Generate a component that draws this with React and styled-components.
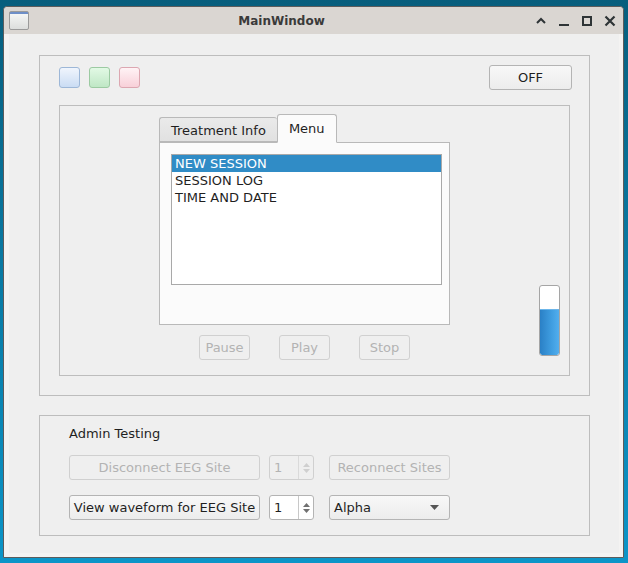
import { useState } from "react"
import styled, { createGlobalStyle, css } from "styled-components"

const Global = createGlobalStyle`
  html, body {
    margin: 0;
    padding: 0;
  }
  body {
    width: 628px;
    height: 563px;
    overflow: hidden;
    background: linear-gradient(180deg, #075e7d 0%, #0a79a2 45%, #0c95c8 100%);
    font-family: "DejaVu Sans", "Liberation Sans", sans-serif;
    font-size: 13px;
    color: #1f1f1f;
  }
`

const Window = styled.div`
  margin: 6px 0 0 3px;
  width: 619px;
  height: 550px;
  border: 1px solid #5c5c5c;
  border-radius: 4px 4px 0 0;
  display: flex;
  flex-direction: column;
  background: #f4f3f2;
`

const TitleBar = styled.div`
  height: 27px;
  display: flex;
  align-items: center;
  padding: 0 6px 0 5px;
  background: #dad6d2;
  border-radius: 4px 4px 0 0;
`

const AppIcon = styled.div`
  width: 18px;
  height: 17px;
  border: 1px solid #9a9a9a;
  border-radius: 2px;
  background: linear-gradient(180deg, #6e8fc8 0 2px, #f4f5f4 2px, #dcdedd 100%);
`

const Title = styled.div`
  flex: 1;
  text-align: center;
  font-weight: bold;
  font-size: 12px;
  color: #3a3a3a;
`

const TitleButtons = styled.div`
  display: flex;
  align-items: center;
  gap: 9px;
  color: #2e3436;
`

const Content = styled.div`
  flex: 1;
  margin: 0 4px 4px 5px;
  padding: 21px 29px 0 30px;
  background: #efefef;
  display: flex;
  flex-direction: column;
  gap: 19px;
`

const GroupBox = styled.div`
  border: 1px solid #bdbdbd;
  height: ${(p) => p.$h}px;
  box-sizing: border-box;
  padding: ${(p) => p.$pad};
  display: flex;
  flex-direction: column;
`

const TopRow = styled.div`
  display: flex;
  align-items: center;
  margin-right: -2px;
  height: 25px;
`

const LedRow = styled.div`
  display: flex;
  gap: 9px;
  flex: 1;
`

const leds = {
  blue: css`border-color: #9db7d7; background: linear-gradient(180deg, #f0f5fd, #cadcf3);`,
  green: css`border-color: #9ccaa2; background: linear-gradient(180deg, #e2f9e5, #bfe7c5);`,
  red: css`border-color: #dca7b1; background: linear-gradient(180deg, #fff3f5, #f8d0d9);`,
}

const Led = styled.div`
  width: 19px;
  height: 19px;
  border: 1px solid;
  border-radius: 3px;
  ${(p) => leds[p.$color]}
`

const PushButton = styled.button`
  box-sizing: border-box;
  width: ${(p) => p.$w}px;
  height: 25px;
  flex-shrink: 0;
  padding: 0;
  font-family: inherit;
  font-size: 13px;
  border: 1px solid #b4b4b4;
  border-radius: 3px;
  color: #1f1f1f;
  background: linear-gradient(180deg, #f8f8f8, #ececec);
  &:disabled {
    color: #b3b3b3;
    border-color: #d0d0d0;
    background: #efefef;
  }
`

const Frame = styled.div`
  margin-top: 15px;
  height: 271px;
  box-sizing: border-box;
  border: 1px solid #bdbdbd;
  padding: 9px 9px 15px 99px;
  display: flex;
  align-items: flex-end;
`

const PlayerColumn = styled.div`
  width: 291px;
  display: flex;
  flex-direction: column;
  align-self: stretch;
`

const TabBar = styled.div`
  display: flex;
  align-items: flex-end;
  height: 27px;
  flex-shrink: 0;
  position: relative;
  z-index: 1;
`

const Tab = styled.div`
  box-sizing: border-box;
  height: 25px;
  padding: 1px 11px 0;
  display: flex;
  align-items: center;
  border: 1px solid #b9b9b9;
  border-right: none;
  border-radius: 3px 3px 0 0;
  background: linear-gradient(180deg, #eaeaea, #e1e1e1);
  ${(p) =>
    p.$active &&
    css`
      height: 29px;
      padding-top: 0;
      margin-bottom: -1px;
      border-right: 1px solid #b9b9b9;
      border-bottom-color: #fbfbfb;
      background: #fbfbfb;
    `}
`

const TabPane = styled.div`
  box-sizing: border-box;
  height: 183px;
  flex-shrink: 0;
  border: 1px solid #b9b9b9;
  background: #fbfbfb;
  padding: 11px 7px 0 11px;
`

const ListBox = styled.div`
  box-sizing: border-box;
  height: 131px;
  border: 1px solid #a9a9a9;
  background: #ffffff;
`

const ListItem = styled.div`
  height: 17px;
  line-height: 17px;
  padding-left: 3px;
  ${(p) => p.$selected && css`background: #308cc6; color: #ffffff;`}
`

const Transport = styled.div`
  display: flex;
  justify-content: center;
  gap: 29px;
  margin-top: 10px;
`

const Spacer = styled.div`
  flex: 1;
`

const Meter = styled.div`
  box-sizing: border-box;
  width: 21px;
  height: 71px;
  margin-bottom: 4px;
  border: 1px solid #a5a5a5;
  border-radius: 3px;
  background: #ffffff;
  display: flex;
  flex-direction: column;
  justify-content: flex-end;
  overflow: hidden;
`

const MeterFill = styled.div`
  background: linear-gradient(90deg, #2a80c6, #3f9de0 60%, #52aeee);
  border-top: 1px solid #6cb6ea;
  border-radius: 0 0 2px 2px;
`

const Caption = styled.div`
  height: 16px;
  line-height: 16px;
  margin-bottom: 13px;
`

const ControlRow = styled.div`
  display: flex;
  align-items: center;
  height: 25px;
  & + & {
    margin-top: 15px;
  }
`

const Spin = styled.div`
  box-sizing: border-box;
  width: 45px;
  height: 25px;
  margin: 0 15px 0 9px;
  border: 1px solid ${(p) => (p.$disabled ? "#d0d0d0" : "#b4b4b4")};
  border-radius: 3px;
  background: ${(p) => (p.$disabled ? "#efefef" : "#ffffff")};
  color: ${(p) => (p.$disabled ? "#b3b3b3" : "#1f1f1f")};
  display: flex;
`

const SpinValue = styled.div`
  flex: 1;
  padding-left: 4px;
  display: flex;
  align-items: center;
`

const SpinArrows = styled.div`
  width: 14px;
  border-left: 1px solid ${(p) => (p.$disabled ? "#dadada" : "#c8c8c8")};
  display: flex;
  flex-direction: column;
  align-items: center;
  justify-content: center;
  gap: 2px;
`

const Combo = styled.div`
  box-sizing: border-box;
  width: 121px;
  height: 25px;
  border: 1px solid #b4b4b4;
  border-radius: 3px;
  background: linear-gradient(180deg, #f8f8f8, #ececec);
  display: flex;
  align-items: center;
  padding: 0 10px 0 4px;
`

const ComboText = styled.div`
  flex: 1;
`

function Arrow({ up, color }) {
  return (
    <svg width="7" height="4" viewBox="0 0 7 4">
      <path d={up ? "M0 4 L3.5 0 L7 4 Z" : "M0 0 L3.5 4 L7 0 Z"} fill={color} />
    </svg>
  )
}

function SpinBox({ value, disabled }) {
  const c = disabled ? "#cfcfcf" : "#707070"
  return (
    <Spin $disabled={disabled}>
      <SpinValue>{value}</SpinValue>
      <SpinArrows $disabled={disabled}>
        <Arrow up color={c} />
        <Arrow color={c} />
      </SpinArrows>
    </Spin>
  )
}

const menuItems = ["NEW SESSION", "SESSION LOG", "TIME AND DATE"]

export default function App() {
  const [selected, setSelected] = useState(0)
  const [tab, setTab] = useState(1)
  const level = 65

  return (
    <>
      <Global />
      <Window>
        <TitleBar>
          <AppIcon />
          <Title>MainWindow</Title>
          <TitleButtons>
            <svg width="14" height="14" viewBox="0 0 14 14">
              <path d="M3 9 L7 5 L11 9" stroke="#2e3436" strokeWidth="2" fill="none" />
            </svg>
            <svg width="14" height="14" viewBox="0 0 14 14">
              <rect x="2" y="10" width="10" height="2" fill="#2e3436" />
            </svg>
            <svg width="14" height="14" viewBox="0 0 14 14">
              <rect x="3" y="3" width="8" height="8" stroke="#2e3436" strokeWidth="2" fill="none" />
            </svg>
            <svg width="14" height="14" viewBox="0 0 14 14">
              <path d="M2.5 2.5 L11.5 11.5 M11.5 2.5 L2.5 11.5" stroke="#2e3436" strokeWidth="2.2" />
            </svg>
          </TitleButtons>
        </TitleBar>
        <Content>
          <GroupBox $h={341} $pad="9px 19px 19px 19px">
            <TopRow>
              <LedRow>
                <Led $color="blue" />
                <Led $color="green" />
                <Led $color="red" />
              </LedRow>
              <PushButton $w={83}>OFF</PushButton>
            </TopRow>
            <Frame>
              <PlayerColumn>
                <TabBar>
                  <Tab $active={tab === 0} onClick={() => setTab(0)}>Treatment Info</Tab>
                  <Tab $active={tab === 1} onClick={() => setTab(1)}>Menu</Tab>
                </TabBar>
                <TabPane>
                  <ListBox>
                    {menuItems.map((item, i) => (
                      <ListItem key={item} $selected={i === selected} onClick={() => setSelected(i)}>
                        {item}
                      </ListItem>
                    ))}
                  </ListBox>
                </TabPane>
                <Transport>
                  <PushButton $w={51} disabled>Pause</PushButton>
                  <PushButton $w={51} disabled>Play</PushButton>
                  <PushButton $w={51} disabled>Stop</PushButton>
                </Transport>
              </PlayerColumn>
              <Spacer />
              <Meter>
                <MeterFill style={{ height: `${level}%` }} />
              </Meter>
            </Frame>
          </GroupBox>
          <GroupBox $h={121} $pad="10px 29px 0 29px">
            <Caption>Admin Testing</Caption>
            <ControlRow>
              <PushButton $w={191} disabled>Disconnect EEG Site</PushButton>
              <SpinBox value="1" disabled />
              <PushButton $w={121} disabled>Reconnect Sites</PushButton>
            </ControlRow>
            <ControlRow>
              <PushButton $w={191}>View waveform for EEG Site</PushButton>
              <SpinBox value="1" />
              <Combo>
                <ComboText>Alpha</ComboText>
                <svg width="9" height="5" viewBox="0 0 9 5">
                  <path d="M0 0 L4.5 5 L9 0 Z" fill="#555" />
                </svg>
              </Combo>
            </ControlRow>
          </GroupBox>
        </Content>
      </Window>
    </>
  )
}
